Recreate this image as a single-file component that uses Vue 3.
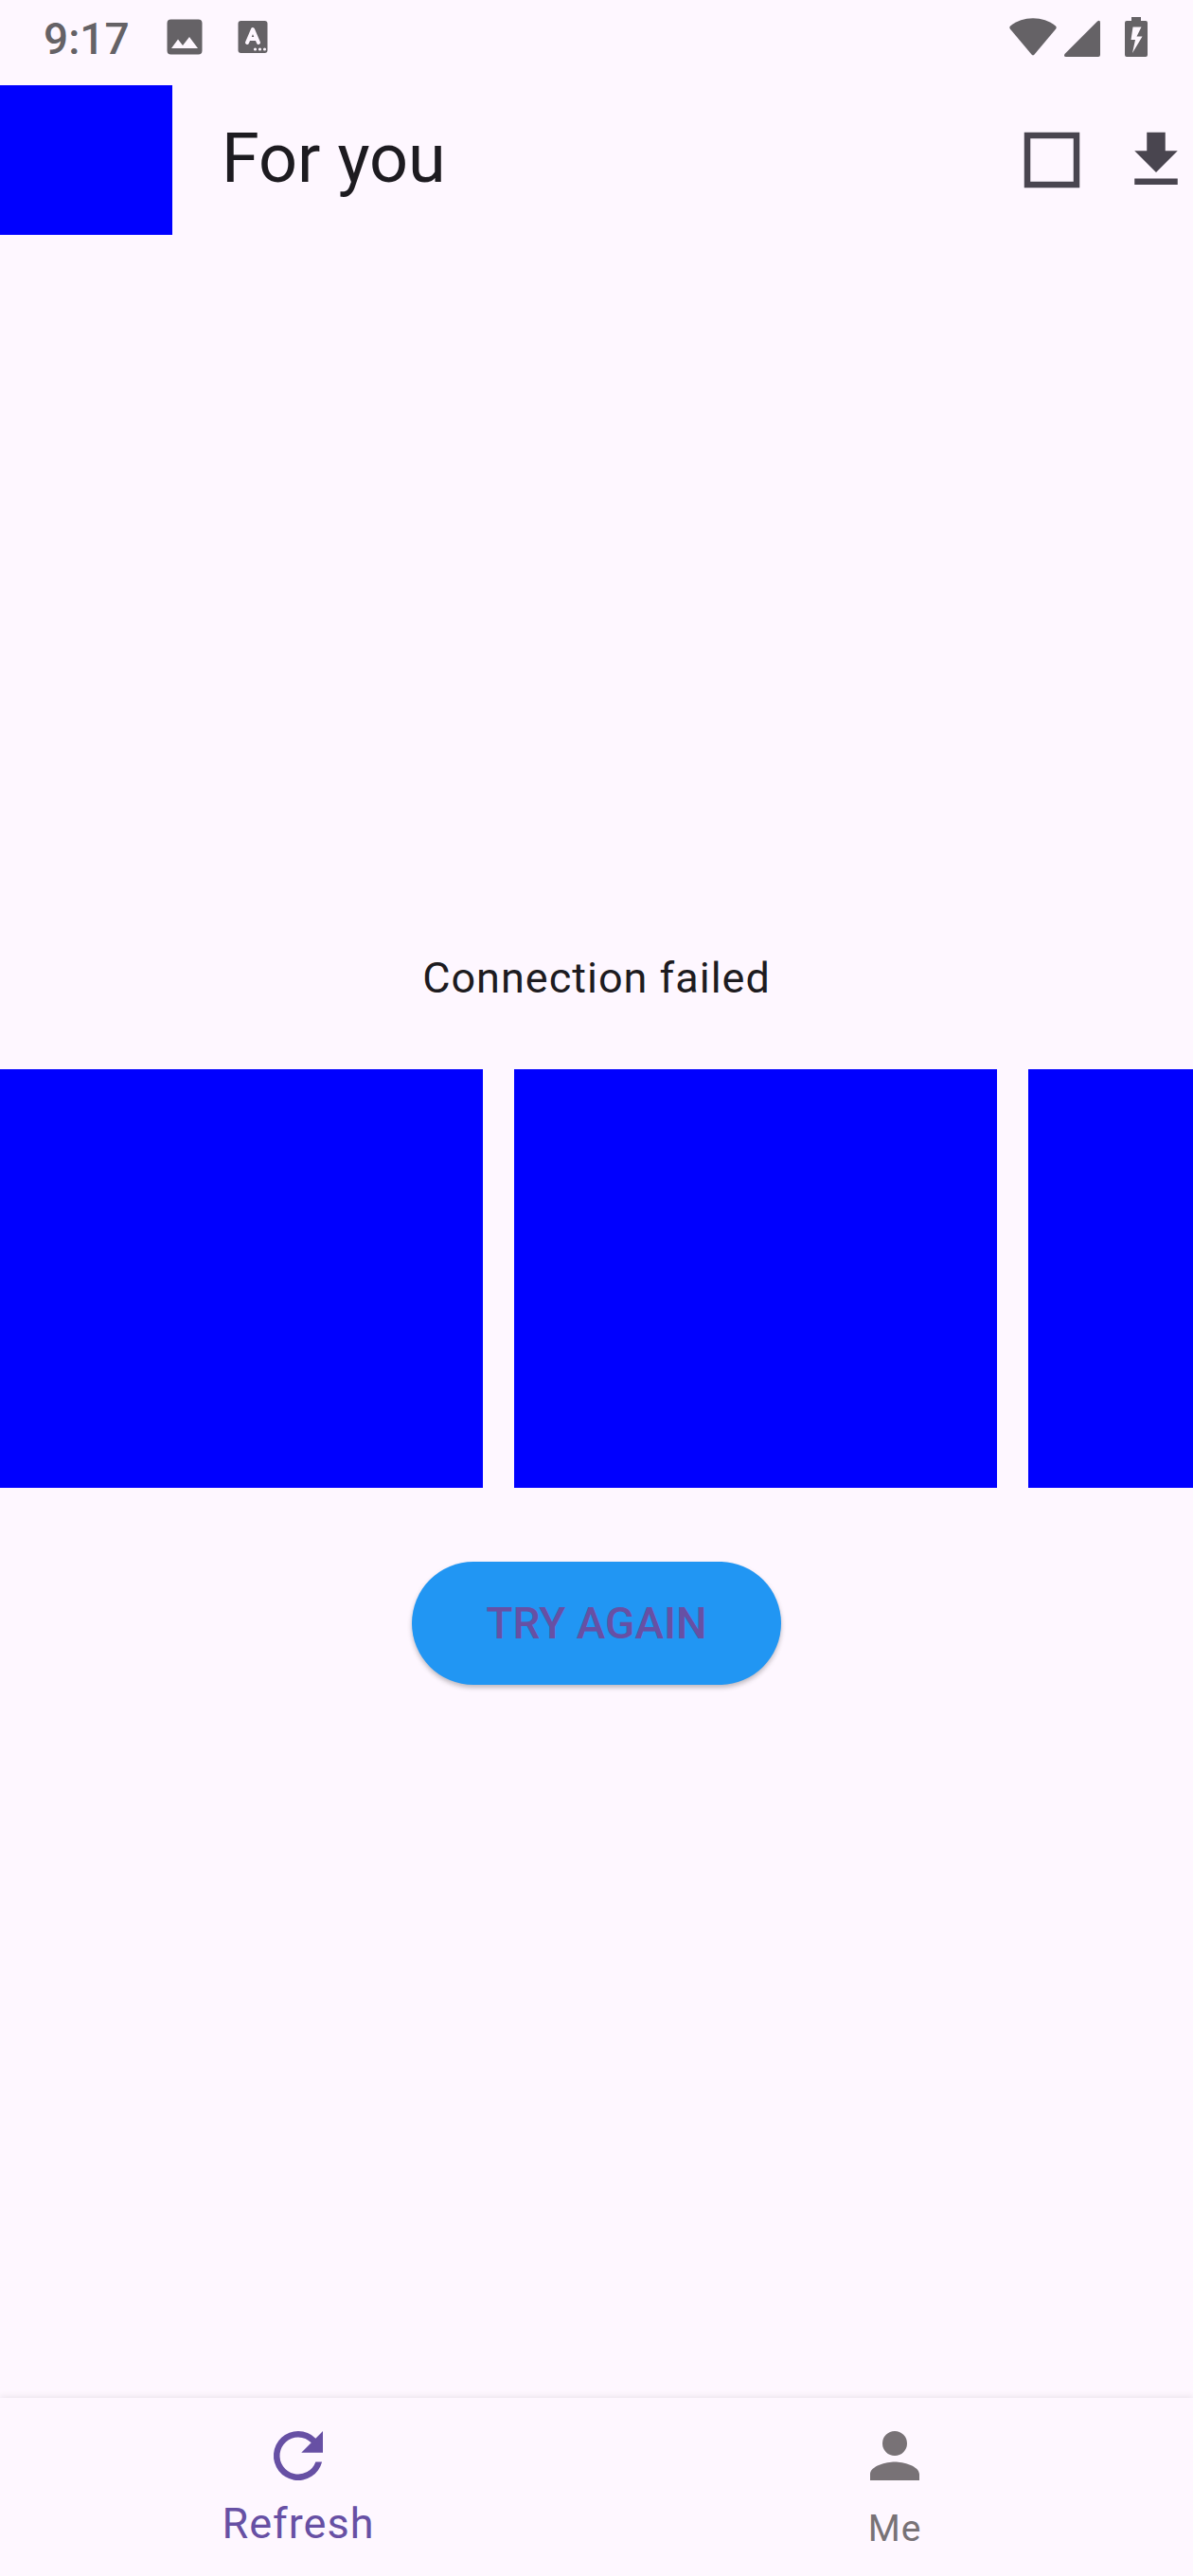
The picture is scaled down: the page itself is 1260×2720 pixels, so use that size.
<script setup>
const slides = [1, 2, 3]
</script>

<template>
  <div class="screen">
    <header class="status">
      <span class="clock">9:17</span>
      <svg class="picture" width="38" height="38" viewBox="0 0 38 38" aria-hidden="true">
        <path fill-rule="evenodd" d="M4.500 .5h29q4 0 4 4v29q0 4-4 4h-29q-4 0-4-4v-29q0-4 4-4zM5 31h28L24 19l-7 9-5-6.500z" />
      </svg>
      <svg width="32" height="36" viewBox="0 0 32 36" aria-hidden="true">
        <rect x=".5" y="1" width="31" height="34" rx="3" />
        <path d="M10 24l6-14 6 14M12 20h8" fill="none" stroke="#fef7ff" stroke-width="4" stroke-linecap="round" stroke-linejoin="round" />
        <g fill="#fef7ff">
          <circle cx="18.500" cy="31" r="1.600" />
          <circle cx="23.500" cy="31" r="1.600" />
          <circle cx="28.500" cy="31" r="1.600" />
        </g>
      </svg>
      <div class="system">
        <svg width="50" height="42" viewBox="0 0 50 42" aria-hidden="true">
          <path d="M1 9.500C8 4 16 1.300 25 1.300S42 4 49 9.500Q50.300 10.800 49.200 12.500L26.500 39.500Q25 41.200 23.500 39.500L.8 12.500Q-.3 10.800 1 9.500z" />
        </svg>
        <svg class="signal" width="38" height="42" viewBox="0 0 38 42" aria-hidden="true">
          <path d="M35 4.600Q38 2.500 38 6v34q0 2-2 2H2q-3 0-1.500-3z" />
        </svg>
        <svg width="24" height="42" viewBox="0 0 24 42" aria-hidden="true">
          <path fill-rule="evenodd" d="M7 0h10v4h5q2 0 2 2v34q0 2-2 2H2q-2 0-2-2V6q0-2 2-2h5zM8.500 10.500L6.500 24h4.500L8 38 18.500 20.500h-6L17.500 10.500z" />
        </svg>
      </div>
    </header>

    <div class="appbar">
      <div class="logo"></div>
      <h1>For you</h1>
      <div class="actions">
        <button type="button" aria-label="Select">
          <svg viewBox="0 0 24 24"><path fill-rule="evenodd" d="M3 3h18v18H3zM5 5v14h14V5z" /></svg>
        </button>
        <button type="button" aria-label="Download">
          <svg viewBox="0 0 24 24"><path d="M19 9h-4V3H9v6H5l7 7zM5 18v2h14v-2z" /></svg>
        </button>
      </div>
    </div>

    <main>
      <p>Connection failed</p>
      <div class="slides">
        <div v-for="slide in slides" :key="slide" class="slide"></div>
      </div>
      <button type="button" class="retry">TRY AGAIN</button>
    </main>

    <nav>
      <a href="#refresh" class="active">
        <svg viewBox="0 0 24 24"><path d="M17.650 6.350A7.958 7.958 0 0 0 12 4a8 8 0 1 0 7.730 10h-2.080A6 6 0 1 1 12 6c1.660 0 3.140.69 4.220 1.780L13 11h7V4z" /></svg>
        <span>Refresh</span>
      </a>
      <a href="#me">
        <svg viewBox="0 0 24 24"><path d="M12 12a4 4 0 1 0 0-8 4 4 0 0 0 0 8zm0 2c-2.670 0-8 1.340-8 4v2h16v-2c0-2.660-5.330-4-8-4z" /></svg>
        <span>Me</span>
      </a>
    </nav>
  </div>
</template>

<style>
body {
  margin: 0;
  background: #fef7ff;
}
</style>

<style scoped>
.screen {
  display: flex;
  flex-direction: column;
  min-height: 100vh;
  background: #fef7ff;
  color: #1d1b20;
  font-family: Roboto, sans-serif;
  font-size: 46px;
}

svg {
  display: block;
  fill: currentColor;
}

button {
  border: 0;
  padding: 0;
  background: none;
  color: inherit;
  font: inherit;
}

.status {
  display: flex;
  align-items: center;
  box-sizing: border-box;
  height: 90px;
  padding: 0 48px 12px 46px;
  color: #656266;
}

.clock {
  font-weight: 500;
  line-height: 76px;
  padding-top: 4px;
}

.picture {
  margin: 0 37px 0 39px;
}

.system {
  display: flex;
  margin-left: auto;
}

.signal {
  margin: 0 26px 0 8px;
}

.appbar {
  display: flex;
  align-items: center;
  height: 158px;
}

.logo {
  width: 182px;
  height: 100%;
  background: #0000ff;
}

h1 {
  margin: 0 0 2px 52px;
  font-size: 72px;
  font-weight: 400;
  line-height: 92px;
}

.actions {
  display: flex;
  gap: 32px;
  margin-left: auto;
  color: #49454f;
}

.actions svg,
nav svg {
  width: 78px;
  height: 78px;
}

main {
  display: flex;
  flex: 1;
  flex-direction: column;
  align-items: center;
  justify-content: center;
}

p {
  margin: 0;
  font-size: 45px;
  line-height: 64px;
  letter-spacing: 1px;
}

.slides {
  display: flex;
  gap: 33px;
  width: 100%;
  margin: 64px 0 78px;
  overflow: hidden;
}

.slide {
  flex: none;
  width: 510px;
  height: 442px;
  background: #0000ff;
}

.retry {
  padding: 0 78px;
  border-radius: 65px;
  background: #2196f3;
  box-shadow: 0 3px 5px rgba(0, 0, 0, 0.25);
  color: #6750a4;
  font-weight: 500;
  line-height: 130px;
}

nav {
  display: grid;
  grid-template-columns: 1fr 1fr;
  height: 188px;
  box-shadow: 0 -2px 6px rgba(0, 0, 0, 0.07);
}

nav a {
  display: flex;
  flex-direction: column;
  align-items: center;
  padding-top: 22px;
  color: #787276;
  font-size: 39px;
  line-height: 76px;
  letter-spacing: 1px;
  text-decoration: none;
}

nav .active {
  color: #6750a4;
  font-size: 45px;
  line-height: 66px;
}
</style>
